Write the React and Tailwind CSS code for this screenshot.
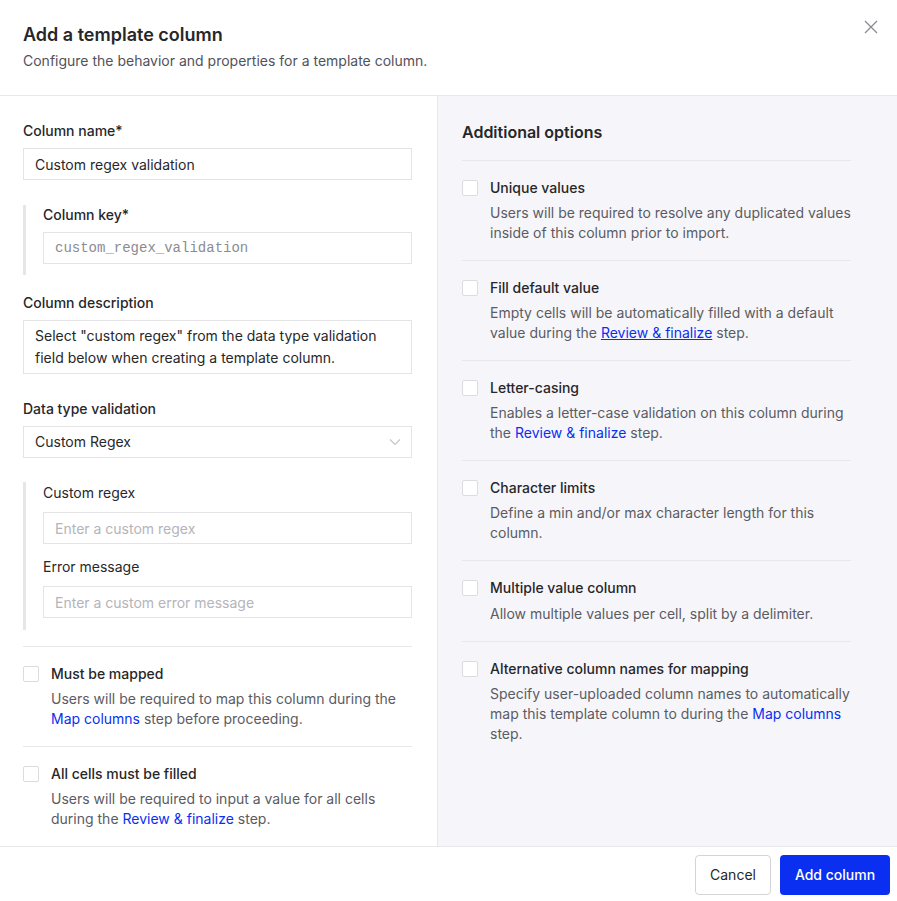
import { useState } from 'react'

const FONT = { fontFamily: 'Inter, "Noto Sans", Arial, sans-serif' }

function Link({ children, underline }) {
  return (
    <a href="#" className={`text-[#0a2ff0] ${underline ? 'underline' : ''}`}>
      {children}
    </a>
  )
}

function Checkbox({ checked, onChange }) {
  return (
    <button
      onClick={onChange}
      className={`mt-[2px] h-4 w-4 flex-shrink-0 rounded-[2px] border ${
        checked ? 'border-[#0a2ff0] bg-[#0a2ff0]' : 'border-[#dcdce0] bg-white'
      }`}
    />
  )
}

function OptionRow({ title, children, single }) {
  const [checked, setChecked] = useState(false)
  return (
    <div className="flex gap-3 border-t border-[#e8e8ec] py-[17px]">
      <Checkbox checked={checked} onChange={() => setChecked(!checked)} />
      <div className="flex-1">
        <p className="text-sm leading-5 font-medium text-[#27272a]">{title}</p>
        <p className={`${single ? 'mt-[6px]' : 'mt-[5px]'} text-sm leading-5 text-[#5b5b63]`}>{children}</p>
      </div>
    </div>
  )
}

function Label({ children, weight = 'font-medium', mb = 'mb-[7px]' }) {
  return <label className={`block text-sm leading-5 text-[#27272a] ${weight} ${mb}`}>{children}</label>
}

function TextInput({ value, placeholder, mono }) {
  return (
    <input
      type="text"
      defaultValue={value}
      placeholder={placeholder}
      readOnly={mono}
      className={`block h-8 w-full border border-[#e4e4e7] bg-white px-[11px] text-sm focus:outline-none ${
        mono ? 'text-[#8b8b92]' : 'text-[#27272a]'
      } placeholder-[#b4b4ba]`}
      style={mono ? { fontFamily: '"Liberation Mono", "DejaVu Sans Mono", monospace' } : undefined}
    />
  )
}

export default function App() {
  return (
    <div className="flex h-[901px] w-[897px] flex-col bg-white text-[#27272a]" style={FONT}>
      {/* Header */}
      <div className="relative border-b border-[#e8e8ec] px-[23px] pt-[21px] pb-6">
        <h2 className="text-lg leading-7 font-semibold text-[#27272a]">Add a template column</h2>
        <p className="mt-[2px] text-sm leading-5 text-[#52525b]">
          Configure the behavior and properties for a template column.
        </p>
        <button className="absolute top-[20px] right-[19px] text-[#8a8a90]">
          <svg width="14" height="14" viewBox="0 0 14 14" fill="none" stroke="currentColor" strokeWidth="1.3">
            <path d="M1 1l12 12M13 1L1 13" />
          </svg>
        </button>
      </div>

      {/* Body */}
      <div className="flex min-h-0 flex-1">
        {/* Left */}
        <div className="w-[438px] flex-shrink-0 border-r border-[#e8e8ec] pt-[25px] pl-[23px] pr-[25px]">
          <Label>Column name*</Label>
          <TextInput value="Custom regex validation" />

          <div className="mt-[25px] border-l-[3px] border-[#e6e6ea] pl-[17px] pb-[11px]">
            <Label>Column key*</Label>
            <TextInput value="custom_regex_validation" mono />
          </div>

          <div className="mt-[18px]">
            <Label>Column description</Label>
            <textarea
              rows={2}
              defaultValue={'Select "custom regex" from the data type validation field below when creating a template column.'}
              className="block h-[54px] w-full resize-none border border-[#e4e4e7] px-[11px] py-1 text-sm leading-[22px] text-[#27272a] focus:outline-none"
            />
          </div>

          <div className="mt-[25px]">
            <Label>Data type validation</Label>
            <div className="flex h-8 w-full items-center justify-between border border-[#e4e4e7] bg-white pl-[11px] pr-[10px] text-sm text-[#27272a]">
              <span>Custom Regex</span>
              <svg width="12" height="8" viewBox="0 0 12 8" fill="none" stroke="#c4c4c9" strokeWidth="1.1">
                <path d="M1 1.5l5 5 5-5" />
              </svg>
            </div>
          </div>

          <div className="mt-6 border-l-[3px] border-[#e6e6ea] pl-[17px] pt-[1px] pb-3">
            <Label weight="font-normal" mb="mb-[9px]">Custom regex</Label>
            <TextInput placeholder="Enter a custom regex" />
            <div className="mt-[13px]">
              <Label weight="font-normal" mb="mb-[9px]">Error message</Label>
              <TextInput placeholder="Enter a custom error message" />
            </div>
          </div>

          <div className="mt-4">
            <OptionRow title="Must be mapped">
              Users will be required to map this column during the <Link>Map columns</Link> step before proceeding.
            </OptionRow>
            <OptionRow title="All cells must be filled">
              Users will be required to input a value for all cells during the <Link>Review &amp; finalize</Link> step.
            </OptionRow>
          </div>
        </div>

        {/* Right */}
        <div className="flex-1 bg-[#f6f6fa] pt-6 pl-6">
          <div className="w-[389px]">
            <h3 className="mb-4 text-base leading-6 font-semibold text-[#27272a]">Additional options</h3>
            <OptionRow title="Unique values">
              Users will be required to resolve any duplicated values inside of this column prior to import.
            </OptionRow>
            <OptionRow title="Fill default value">
              Empty cells will be automatically filled with a default value during the{' '}
              <Link underline>Review &amp; finalize</Link> step.
            </OptionRow>
            <OptionRow title="Letter-casing">
              Enables a letter-case validation on this column during the <Link>Review &amp; finalize</Link> step.
            </OptionRow>
            <OptionRow title="Character limits">
              Define a min and/or max character length for this column.
            </OptionRow>
            <OptionRow title="Multiple value column" single>
              Allow multiple values per cell, split by a delimiter.
            </OptionRow>
            <OptionRow title="Alternative column names for mapping">
              Specify user-uploaded column names to automatically map this template column to during the{' '}
              <Link>Map columns</Link> step.
            </OptionRow>
          </div>
        </div>
      </div>

      {/* Footer */}
      <div className="flex h-[55px] flex-shrink-0 items-start justify-end gap-[9px] border-t border-[#e8e8ec] pt-2 pr-[7px]">
        <button className="h-10 w-[76px] rounded-[4px] border border-[#d4d4d8] bg-white text-sm text-[#27272a]">
          Cancel
        </button>
        <button className="h-10 w-[110px] rounded-[4px] bg-[#0a2ff0] text-sm font-medium text-white">
          Add column
        </button>
      </div>
    </div>
  )
}
